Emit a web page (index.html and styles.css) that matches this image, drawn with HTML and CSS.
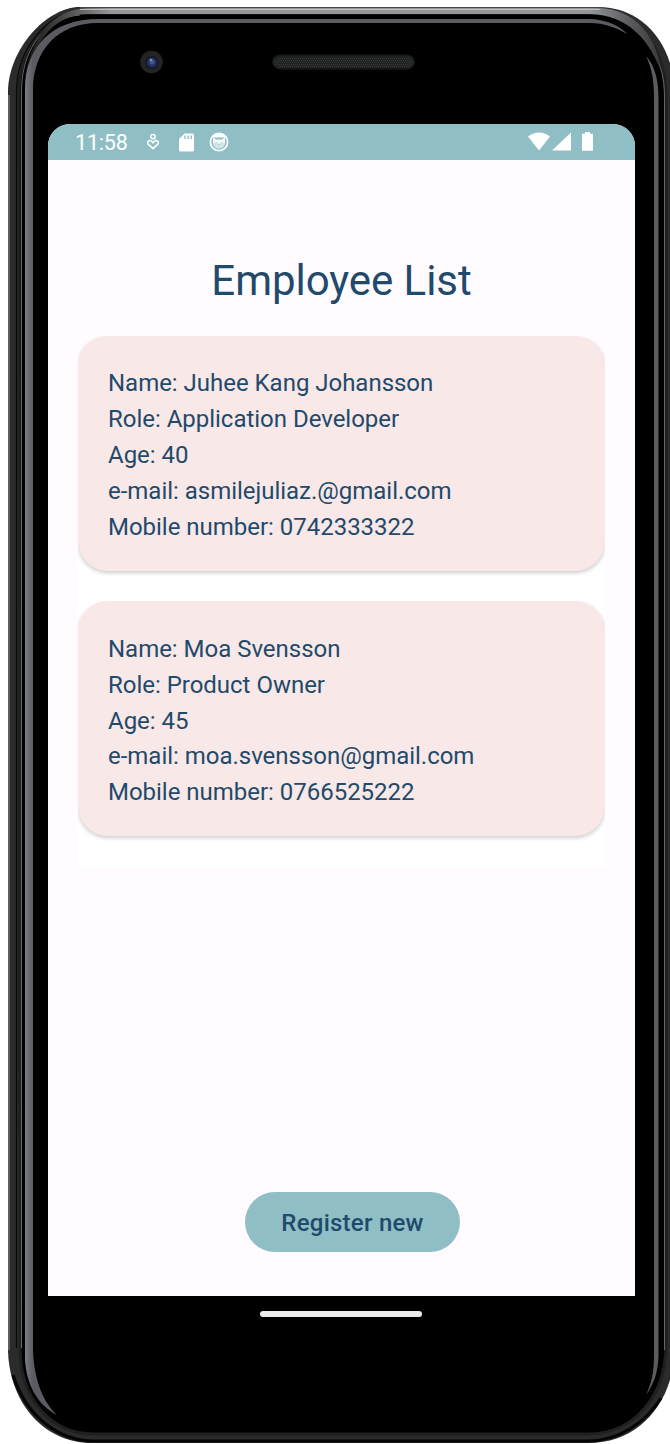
FILE: index.html
```html
<!DOCTYPE html>
<html lang="en">
<head>
<meta charset="utf-8">
<title>Employee List</title>
<link rel="stylesheet" href="styles.css">
</head>
<body>
<div class="device">
  <svg class="frame" width="670" height="1444" viewBox="0 0 670 1444" aria-hidden="true">
    <defs>
      <linearGradient id="shine" gradientUnits="userSpaceOnUse" x1="25" y1="0" x2="33" y2="0">
        <stop offset="0" stop-color="#7b7e87"/><stop offset=".5" stop-color="#686b72"/><stop offset="1" stop-color="#5b5c62"/>
      </linearGradient>
      <linearGradient id="band" gradientUnits="userSpaceOnUse" x1="22" y1="0" x2="666" y2="0">
        <stop offset="0" stop-color="#111"/><stop offset=".06" stop-color="#444"/><stop offset=".14" stop-color="#96979a"/><stop offset=".88" stop-color="#96979a"/><stop offset=".95" stop-color="#55565a"/><stop offset="1" stop-color="#333"/>
      </linearGradient>
    </defs>
    <path d="M80 7H598C642 7 675 43 675 98V1345C675 1400 641 1443 588 1443H92C42 1443 8 1400 8 1348V92C8 50 46 7 80 7Z" fill="#2c2b2b"/>
    <path d="M9 95V1350" stroke="#6f6f70" stroke-width="1.5"/>
    <path d="M19 92C19 47 47 13 88 13H598C637 13 666 46 666 98V1345C666 1396 634 1434 588 1434H94C50 1434 20 1398 20 1348Z" fill="#000" stroke="#202020" stroke-width="3"/>
    <path d="M13 1375C27 1419 61 1441 94 1441H588C619 1441 646 1422 661 1398" fill="none" stroke="#050505" stroke-width="3"/>
    <path d="M16.500 1348V92C16.500 50 45 14 80 10" fill="none" stroke="#080808" stroke-width="1.200"/>
    <path d="M21.500 1348V90C22 46 48 17 80 15M664.500 1350V98C664.500 76 660 62 652 48" fill="none" stroke="#66676a" stroke-width="1"/>
    <path d="M24 82C30 40 50 9 88 8H598C636 9 657 37 662 74C650 40 628 15 590 14H88C53 14 34 43 24 82Z" fill="url(#band)"/>
    <path d="M80 9.500H600" stroke="#bdbdbd" stroke-width="1"/>
    <path d="M80 7.500H600" stroke="#444" stroke-width="1"/>
    <path d="M25 1358V90C25 46 53 19 98 19H590C608 20 620 26 627 34C615 27 604 23 590 23H98C58 23 33 50 33 90V1350C34 1380 43 1402 57 1415C39 1406 26 1386 25 1358Z" fill="url(#shine)"/>
    <path d="M646 56C654 65 658.500 78 658.500 98V1356C658 1372 654 1384 646 1395C651 1384 654 1374 654 1355V98C654 80 652 69 646 56Z" fill="#5c5b62"/>
    <rect x="272.500" y="55" width="142" height="14" rx="7" fill="#202222" stroke="#151515"/>
    <path d="M278 58.500H409M275 60.500H412M274 62.500H413M275 64.500H412M278 66.500H409" stroke="#393b3b" stroke-dasharray="1 1"/>
    <circle cx="151.500" cy="62" r="11.300" fill="#242326"/>
    <circle cx="151.800" cy="62.500" r="6.500" fill="#111525"/>
    <circle cx="151.800" cy="62.500" r="5" fill="#25335f"/>
    <circle cx="152" cy="62" r="2.500" fill="#3f5694"/>
    <circle cx="151" cy="60" r="1.300" fill="#7f90b0"/>
  </svg>
  <main class="screen">
    <header class="status">
      <span class="clock">11:58</span>
      <svg class="ico-heart" width="14" height="18" viewBox="0 0 14 18"><circle cx="7" cy="3.600" r="2.200" fill="none" stroke="#fff" stroke-width="1.500"/><path d="M7 15.600L2.200 11.200C.3 8.900 3.600 6.300 5.600 8.300L7 9.800L8.400 8.300C10.400 6.300 13.700 8.900 11.800 11.200Z" fill="none" stroke="#fff" stroke-width="1.600"/></svg>
      <svg class="ico-card" width="15" height="19" viewBox="0 0 15 19"><path d="M5.500 .5H13.500Q15 .5 15 2V17Q15 18.500 13.500 18.500H1.500Q0 18.500 0 17V6Z" fill="#fff"/><path d="M6 2.500V6M9.200 2.500V6M12.300 2.500V6" stroke="#8fbfc5" stroke-width="1.400"/></svg>
      <svg class="ico-cat" width="20" height="20" viewBox="0 0 20 20"><circle cx="10" cy="10" r="8.600" fill="none" stroke="#fff" stroke-width="1.700"/><path d="M3 4.500Q10 -1 17 4.500L14 5.500H6Z" fill="#fff"/><path d="M4 5L7 7.500H13L16 5V11.500H4Z" fill="#fff" opacity=".9"/><path d="M4 11.500H16Q15 16.500 10 16.500Q5 16.500 4 11.500Z" fill="#fff" opacity=".6"/><path d="M6.500 10.500H7.500M12.500 10.500H13.500M9.500 12.500H10.500" stroke="#8fbfc5" stroke-width="1.200"/></svg>
      <span class="gap"></span>
      <svg class="ico-signal" width="66" height="19" viewBox="0 0 66 19"><path d="M0 4.500Q11-3.500 22 4.500L11 18.500Z" fill="#fff"/><path d="M24 18.500L43 .5V18.500Z" fill="#fff"/><path d="M54 1.800H57V0H62V1.800H65V18.800H54Z" fill="#fff"/></svg>
    </header>
    <h1 class="title">Employee List</h1>
    <div class="list">
      <article class="card">
        <p>Name: Juhee Kang Johansson</p>
        <p>Role: Application Developer</p>
        <p>Age: 40</p>
        <p>e-mail: asmilejuliaz.@gmail.com</p>
        <p>Mobile number: 0742333322</p>
      </article>
      <article class="card">
        <p>Name: Moa Svensson</p>
        <p>Role: Product Owner</p>
        <p>Age: 45</p>
        <p>e-mail: moa.svensson@gmail.com</p>
        <p>Mobile number: 0766525222</p>
      </article>
    </div>
    <button class="register">Register new</button>
  </main>
  <div class="home-bar"></div>
</div>
</body>
</html>
```
FILE: styles.css
```css
* { box-sizing: border-box; }
body { margin: 0; background: #fff; font-family: Roboto, sans-serif; overflow: hidden; }
.device { position: relative; width: 670px; height: 1444px; padding: 124px 35px 0 48px; }
.frame { position: absolute; left: 0; top: 0; }
.screen { position: relative; display: flex; flex-direction: column; height: 1172px; background: #fffbff; border-radius: 22px 22px 0 0; overflow: hidden; color: #1f4a6b; }
.status { display: flex; align-items: center; flex: none; height: 36px; padding: 0 41px 0 27px; background: #8fbfc5; color: #fff; }
.clock { width: 54px; font-size: 21.500px; letter-spacing: -.2px; line-height: 36px; padding-top: 2px; white-space: nowrap; }
.ico-heart { margin-left: 17px; }
.ico-card { margin-left: 19px; }
.ico-cat { margin-left: 15px; }
.ico-signal { margin-bottom: 1px; }
.gap { flex: 1; }
.title { margin: 93.500px 0 0; text-align: center; font-size: 42px; line-height: 54px; font-weight: 400; letter-spacing: -.05px; }
.list { display: flex; flex-direction: column; gap: 30px; margin: 28.500px 30px 0 30px; padding-bottom: 31px; background: linear-gradient(#fffbff 0 200px, #fff 200px); }
.card { height: 235.400px; padding: 30px 30px; border-radius: 30px; background: #f8e8e7; box-shadow: 0 2px 4px rgba(0, 0, 0, .2); clip-path: inset(0 0 -8px 0); }
.card + .card { margin-top: -.4px; padding-top: 30.700px; }
.card p { margin: 0; font-size: 24px; line-height: 35.900px; letter-spacing: -.02px; white-space: nowrap; }
.register { width: 215px; height: 60px; margin: auto 0 44px 197px; padding: 2px 0 0; border: 0; border-radius: 30px; background: #8fbfc5; color: #1f4a6b; font: 500 24px Roboto, sans-serif; letter-spacing: .25px; }
.home-bar { position: relative; width: 162px; height: 6px; margin: 15px 0 0 212px; border-radius: 3px; background: #ececec; }
```
